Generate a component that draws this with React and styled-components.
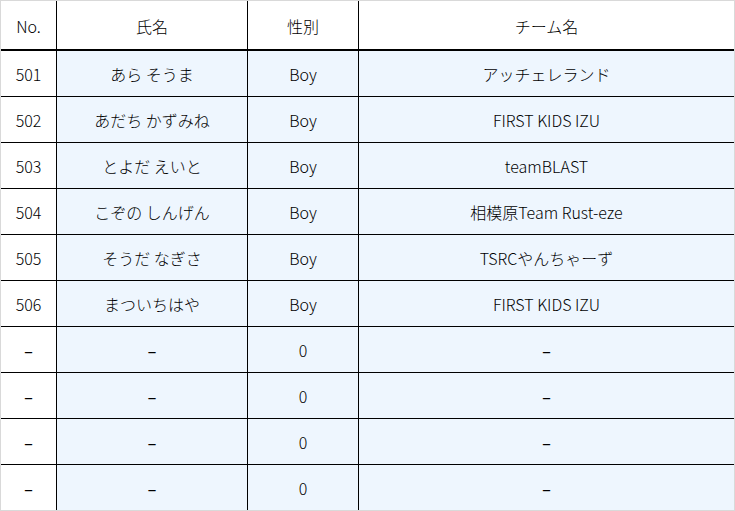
import React from "react";
import styled, { createGlobalStyle } from "styled-components";

const GlobalStyle = createGlobalStyle`
  html, body {
    margin: 0;
    padding: 0;
    background: #ffffff;
  }
  body {
    font-family: "Noto Sans CJK JP", "Noto Sans", sans-serif;
    font-weight: 300;
    color: #000;
  }
`;

const Table = styled.table`
  width: 735px;
  border-collapse: separate;
  border-spacing: 0;
  border: 1px solid #d9d9d9;
  box-sizing: border-box;
  table-layout: fixed;
`;

const HeadCell = styled.th`
  box-sizing: border-box;
  height: 50px;
  width: ${(p) => p.w}px;
  padding: 2px 0 0;
  font-weight: 300;
  font-size: 16px;
  text-align: center;
  background: #ffffff;
  border-bottom: 2px solid #000;
  border-right: ${(p) => (p.last ? "none" : "1px solid #000")};
`;

const Cell = styled.td`
  box-sizing: border-box;
  height: ${(p) => (p.end ? 45 : 46)}px;
  padding: 1px 0 0;
  font-size: 16px;
  line-height: 20px;
  text-align: center;
  white-space: nowrap;
  background: ${(p) => (p.plain ? "#ffffff" : "#eef6fe")};
  border-bottom: ${(p) => (p.end ? "none" : "1px solid #000")};
  border-right: ${(p) => (p.last ? "none" : "1px solid #000")};
`;

const Dash = styled.span`
  font-family: "DejaVu Sans", sans-serif;
  font-weight: 400;
  font-size: 18px;
  line-height: 20px;
`;

const columns = [
  { label: "No.", w: 56 },
  { label: "氏名", w: 191 },
  { label: "性別", w: 111 },
  { label: "チーム名", w: 375 },
];

const players = [
  ["501", "あら そうま", "Boy", "アッチェレランド"],
  ["502", "あだち かずみね", "Boy", "FIRST KIDS IZU"],
  ["503", "とよだ えいと", "Boy", "teamBLAST"],
  ["504", "こぞの しんげん", "Boy", "相模原Team Rust-eze"],
  ["505", "そうだ なぎさ", "Boy", "TSRCやんちゃーず"],
  ["506", "まついちはや", "Boy", "FIRST KIDS IZU"],
  ["–", "–", "0", "–"],
  ["–", "–", "0", "–"],
  ["–", "–", "0", "–"],
  ["–", "–", "0", "–"],
];

const App = () => {
  return (
    <>
      <GlobalStyle />
      <Table>
        <thead>
          <tr>
            {columns.map((c, i) => (
              <HeadCell key={c.label} w={c.w} last={i === columns.length - 1}>
                {c.label}
              </HeadCell>
            ))}
          </tr>
        </thead>
        <tbody>
          {players.map((row, r) => (
            <tr key={r}>
              {row.map((value, i) => (
                <Cell
                  key={i}
                  plain={i === 0}
                  last={i === row.length - 1}
                  end={r === players.length - 1}
                >
                  {value === "–" ? <Dash>{value}</Dash> : value}
                </Cell>
              ))}
            </tr>
          ))}
        </tbody>
      </Table>
    </>
  );
};

export default App;
